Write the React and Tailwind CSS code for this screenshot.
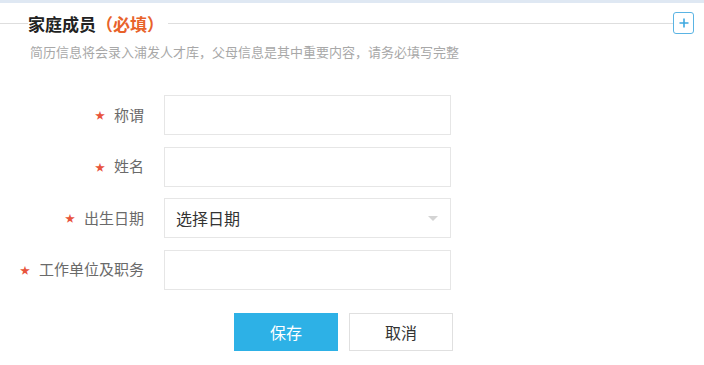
import React from "react";

const font = { fontFamily: '"Noto Sans CJK SC", "Noto Sans", sans-serif' };

function Row({ label, children }) {
  return (
    <div className="flex items-center h-10">
      <div className="w-[164px] shrink-0 flex items-center justify-end pr-[20px] text-[15px] text-[#6a6a6a]">
        <span className="text-[#e8543c] text-[10px] mr-[9px] leading-none">★</span>
        <span>{label}</span>
      </div>
      {children}
    </div>
  );
}

export default function App() {
  return (
    <div className="w-[704px] h-[365px] bg-white relative overflow-hidden" style={font}>
      <div className="h-[3px] bg-[#dfe8f3]" />
      <div className="flex items-center h-[40px] pr-[10px]">
        <div className="w-[28px] h-px bg-[#dedede] shrink-0" />
        <div className="text-[17px] font-bold text-[#222] leading-none whitespace-nowrap">
          家庭成员<span className="text-[#e8622a]">（必填）</span>
        </div>
        <div className="flex-1 h-px bg-[#dedede] ml-1" />
        <div className="w-[21px] h-[22px] shrink-0 border-[1.5px] border-[#5ab4e4] rounded-[3px] flex items-center justify-center">
          <svg width="10" height="10" viewBox="0 0 10 10">
            <path d="M5 0.5V9.5M0.5 5H9.5" stroke="#3ea8e0" strokeWidth="1.6" />
          </svg>
        </div>
      </div>
      <div className="pl-[30px] text-[13px] text-[#a8a8a8] leading-none mt-[2px]">
        简历信息将会录入浦发人才库，父母信息是其中重要内容，请务必填写完整
      </div>
      <div className="mt-[37px] flex flex-col gap-[11.5px]">
        {["称谓", "姓名"].map((l) => (
          <Row key={l} label={l}>
            <div className="w-[287px] h-10 border border-[#e6e6e6]" />
          </Row>
        ))}
        <Row label="出生日期">
          <div className="w-[287px] h-10 border border-[#e6e6e6] flex items-center justify-between px-[11px] text-[16px] text-[#333]">
            <span>选择日期</span>
            <span className="w-0 h-0 border-l-[5px] border-r-[5px] border-t-[5px] border-l-transparent border-r-transparent border-t-[#d4d4d4] mr-[1px]" />
          </div>
        </Row>
        <Row label="工作单位及职务">
          <div className="w-[287px] h-10 border border-[#e6e6e6]" />
        </Row>
      </div>
      <div className="flex gap-[11px] pl-[234px] mt-[23px]">
        <div className="w-[104px] h-[38px] bg-[#2db1e6] text-white text-[16px] flex items-center justify-center">保存</div>
        <div className="w-[104px] h-[38px] border border-[#e0e0e0] text-[#333] text-[16px] flex items-center justify-center">取消</div>
      </div>
    </div>
  );
}
